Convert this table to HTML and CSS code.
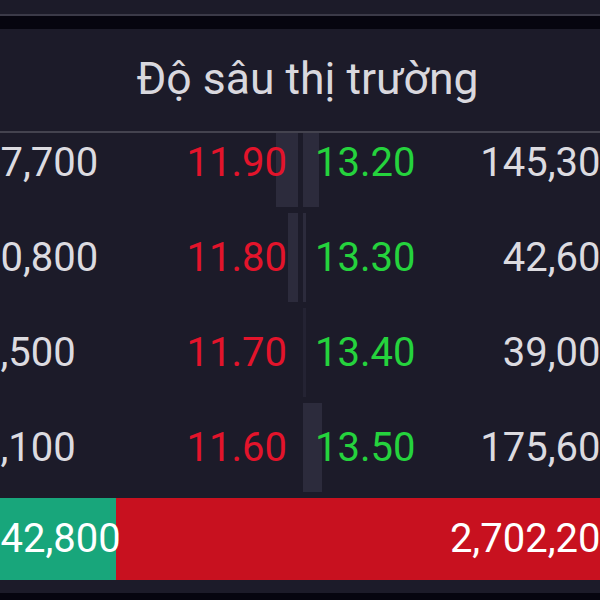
FILE: index.html
```html
<!DOCTYPE html>
<html lang="vi">
<head>
<meta charset="utf-8">
<title>Độ sâu thị trường</title>
<link rel="stylesheet" href="styles.css">
</head>
<body>
<div class="screen">
  <div class="status"></div>
  <div class="sep"></div>
  <section class="panel">
    <h1 class="title">Độ sâu thị trường</h1>
    <div class="book">
      <div class="rows">
        <div class="row">
          <span class="vol bid-vol">17,700</span>
          <div class="half bid"><span class="bar" style="width:22px"></span><span class="price down">11.90</span></div>
          <div class="half ask"><span class="bar" style="width:16px"></span><span class="price up">13.20</span></div>
          <span class="vol ask-vol">145,300</span>
        </div>
        <div class="row">
          <span class="vol bid-vol">10,800</span>
          <div class="half bid"><span class="bar" style="width:10px"></span><span class="price down">11.80</span></div>
          <div class="half ask"><span class="bar" style="width:3px"></span><span class="price up">13.30</span></div>
          <span class="vol ask-vol">42,600</span>
        </div>
        <div class="row">
          <span class="vol bid-vol">1,500</span>
          <div class="half bid"><span class="bar" style="width:0px"></span><span class="price down">11.70</span></div>
          <div class="half ask"><span class="bar faint" style="width:3px"></span><span class="price up">13.40</span></div>
          <span class="vol ask-vol">39,000</span>
        </div>
        <div class="row">
          <span class="vol bid-vol">1,100</span>
          <div class="half bid"><span class="bar" style="width:0px"></span><span class="price down">11.60</span></div>
          <div class="half ask"><span class="bar" style="width:19px"></span><span class="price up">13.50</span></div>
          <span class="vol ask-vol">175,600</span>
        </div>
      </div>
    </div>
    <div class="totals">
      <div class="buy" style="width:138px">142,800</div>
      <div class="sell">2,702,200</div>
    </div>
  </section>
</div>
</body>
</html>
```
FILE: styles.css
```css
html, body {
  margin: 0;
  padding: 0;
}
body {
  background: #06050f;
  height: 600px;
  overflow: hidden;
  font-family: Roboto, "Noto Sans", "Liberation Sans", sans-serif;
}
.screen {
  width: 645px;
  margin-left: -22px;
}
.status {
  height: 14px;
  background: #1c1b29;
  border-bottom: 2px solid #3b3a48;
}
.sep {
  height: 13px;
  background: #06050f;
}
.panel {
  background: #1c1b29;
  padding-bottom: 13px;
}
.title {
  margin: 0;
  height: 100px;
  padding: 0 0 2px 14px;
  line-height: 100px;
  text-align: center;
  font-size: 44.5px;
  font-weight: 400;
  color: #d9d8de;
  border-bottom: 2px solid #44434f;
}
.book {
  height: 362px;
  overflow: hidden;
}
.rows {
  margin-top: -18px;
}
.row {
  display: grid;
  grid-template-columns: 1fr 150px 150px 1fr;
  column-gap: 5px;
  height: 95px;
  font-size: 40px;
  line-height: 95px;
  color: #dcdbe0;
}
.vol {
  white-space: nowrap;
}
.bid-vol {
  text-align: left;
}
.ask-vol {
  text-align: right;
}
.half {
  display: grid;
}
.half > * {
  grid-area: 1 / 1;
}
.bar {
  align-self: stretch;
  margin: 3px 0;
  background: #2c2b3c;
}
.bar.faint {
  background: #242333;
}
.bid .bar {
  justify-self: end;
}
.ask .bar {
  justify-self: start;
}
.price {
  position: relative;
}
.bid .price {
  justify-self: end;
  padding-right: 11px;
}
.ask .price {
  justify-self: start;
  padding-left: 12px;
}
.down {
  color: #e3142b;
}
.up {
  color: #25d33d;
}
.totals {
  display: flex;
  margin-top: 3px;
  height: 82px;
  line-height: 82px;
  background: #c8111f;
  color: #ffffff;
  font-size: 40px;
}
.buy {
  flex: none;
  background: #18a67b;
  white-space: nowrap;
  padding-left: 0;
  box-sizing: border-box;
}
.sell {
  flex: 1;
  text-align: right;
  white-space: nowrap;
}
```
